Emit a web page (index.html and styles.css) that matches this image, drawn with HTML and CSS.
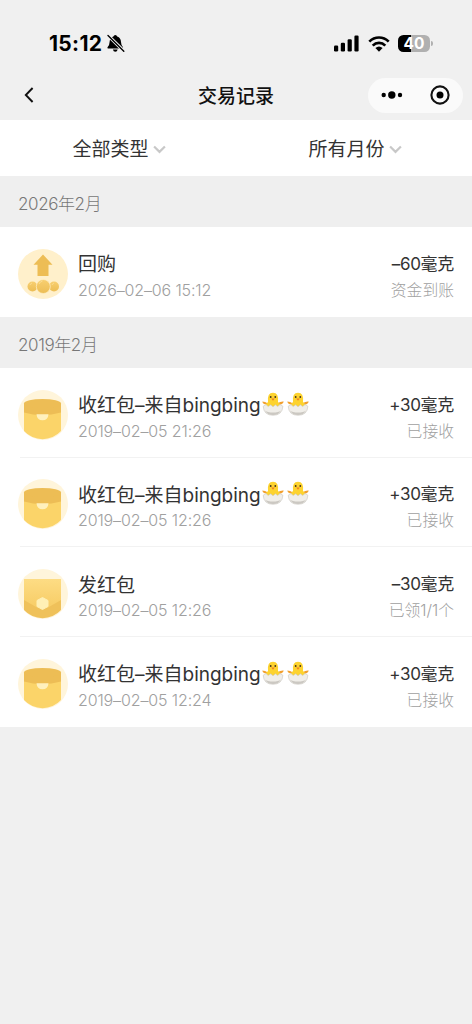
FILE: index.html
```html
<!DOCTYPE html>
<html lang="zh-CN">
<head>
    <meta charset="UTF-8">
    <meta name="viewport" content="width=device-width, initial-scale=1.0">
    <title>交易记录</title>
    <link rel="stylesheet" href="styles.css">
</head>
<body>
    <!-- shared icons -->
    <svg class="defs" width="0" height="0">
        <defs>
            <linearGradient id="gold" x1="0" y1="0" x2="0" y2="1">
                <stop offset="0" stop-color="#f8cf70"/>
                <stop offset="1" stop-color="#ecbd55"/>
            </linearGradient>
            <linearGradient id="flap" x1="0" y1="0" x2="0" y2="1">
                <stop offset="0" stop-color="#fddc84"/>
                <stop offset="1" stop-color="#f7cd66"/>
            </linearGradient>
        </defs>
        <symbol id="received" viewBox="0 0 50 50">
            <circle cx="25" cy="25" r="25" fill="#fff5db"/>
            <path d="M6 14h37v27A25 25 0 0 1 6 41z" fill="#fbd469"/>
            <path d="M6 13.500v9q18 5 37 0v-9z" fill="#edbd55"/>
            <ellipse cx="24.500" cy="13.500" rx="18.500" ry="4.500" fill="#edbd55"/>
            <path d="M18.500 24.300h12q-.5 6-6 6t-6-6z" fill="#fff0bd"/>
        </symbol>
        <symbol id="sent" viewBox="0 0 50 50">
            <circle cx="25" cy="25" r="25" fill="#fff5db"/>
            <path d="M6 10h37v31A25 25 0 0 1 6 41z" fill="#efc15a"/>
            <path d="M6 10h37v21L30 38.500H19L6 31z" fill="url(#flap)"/>
            <path d="M24.500 28.500l5.500 3v6l-5.500 3-5.500-3v-6z" fill="#fff0b5" stroke="#fff0b5" stroke-linejoin="round"/>
        </symbol>
        <symbol id="chick" viewBox="0 0 22 24">
            <path d="M4.500 12.500Q.8 12.500 .3 9.500q3 .2 5.200 1.800L16 11q2.500-1.800 5.700-1.500-.5 3-4.700 3.300V16H5z" fill="#f2a02e"/>
            <path d="M4 15v-3l2-2Q5 .8 11 .8T16 10l2 2v3z" fill="#fdd32f"/>
            <circle cx="8.700" cy="5" r=".9" fill="#43351b"/>
            <circle cx="13.300" cy="5" r=".9" fill="#43351b"/>
            <path d="M9.200 6.600h3.600L11 8.800z" fill="#ef7f22"/>
            <path d="M1.200 14.200l2.800-1.700 2.200 2 2.500-1.700 2.300 2 2.400-2 2.300 1.700 2.300-2 2.900 1.700Q20.300 23.300 11 23.300T1.200 14.200z" fill="#f0eee9" stroke="#c9c6bf" stroke-width=".6"/>
            <path d="M3 18.500q2.500 4.500 8 4.500t8-4.500q-2.500 2-8 2t-8-2z" fill="#cbc8c2"/>
        </symbol>
        <symbol id="arrow" viewBox="0 0 12 8">
            <path d="M1 1.200l5 5 5-5" fill="none" stroke="#c8c8c8" stroke-width="2"/>
        </symbol>
    </svg>

    <div class="status-bar">
        <div class="status-left">
            <span class="time">15:12</span>
            <svg width="19" height="19" viewBox="0 0 19 19">
                <path d="M9.300 1q1.500 0 1.900 1.500 3.600 1 3.800 5.500.1 3.500 2 5.200.5 1.300-.8 1.300H2.300Q1 14.500 1.500 13.200 3.500 11.500 3.600 8q.2-4.500 3.800-5.500Q7.800 1 9.300 1z"/>
                <path d="M6.900 15.600h4.800q-.5 2.200-2.400 2.200t-2.400-2.200z"/>
                <path d="M2.200 1.600l15.600 15.400" stroke="#f0f0f0" stroke-width="3.200"/>
                <path d="M2 1.600l15.800 15.600" stroke="#000" stroke-width="1.400" stroke-linecap="round"/>
            </svg>
        </div>
        <div class="status-right">
            <svg width="25" height="17" viewBox="0 0 25 17">
                <rect x="0" y="10.500" width="4.200" height="6" rx="1.200"/>
                <rect x="6.800" y="7.800" width="4.200" height="8.700" rx="1.200"/>
                <rect x="13.600" y="4.300" width="4.200" height="12.200" rx="1.200"/>
                <rect x="20.400" y=".5" width="4.200" height="16" rx="1.200"/>
            </svg>
            <svg class="wifi" width="22" height="16" viewBox="0 0 22 16">
                <path d="M1.300 5.600q4.200-4.100 9.700-4.100t9.700 4.100M4.700 9.600q2.700-2.700 6.300-2.700t6.300 2.700" fill="none" stroke="#000" stroke-width="2.700"/>
                <path d="M11 15.700L7.400 12q3.600-3.200 7.200 0z"/>
            </svg>
            <div class="battery"><span>40</span></div>
            <div class="battery-tip"></div>
        </div>
    </div>

    <div class="nav">
        <svg class="back" width="10" height="16" viewBox="0 0 10 16">
            <path d="M8.600 1L1.800 8l6.800 7" fill="none" stroke="#111" stroke-width="1.900"/>
        </svg>
        <h1>交易记录</h1>
        <div class="capsule">
            <svg width="22" height="8" viewBox="0 0 22 8">
                <circle cx="2.700" cy="4" r="2.200"/>
                <circle cx="10.800" cy="4" r="3.700"/>
                <circle cx="19" cy="4" r="2.200"/>
            </svg>
            <svg width="20" height="20" viewBox="0 0 20 20">
                <circle cx="10" cy="10" r="8.600" fill="none" stroke="#111" stroke-width="2.100"/>
                <circle cx="10" cy="10" r="3.500"/>
            </svg>
        </div>
    </div>

    <div class="filters">
        <div class="filter">全部类型<svg width="13" height="9"><use href="#arrow"/></svg></div>
        <div class="filter">所有月份<svg width="13" height="9"><use href="#arrow"/></svg></div>
    </div>

    <div class="month">2026年2月</div>
    <div class="list">
        <div class="item">
            <svg class="icon" viewBox="0 0 50 50">
                <circle cx="25" cy="25" r="25" fill="#fff0cb"/>
                <path d="M25 5.500l9.500 10.300h-4V27h-11V15.800h-4z" fill="#edbd55"/>
                <circle cx="14.500" cy="37.500" r="5" fill="url(#gold)"/>
                <circle cx="36" cy="37.500" r="5" fill="url(#gold)"/>
                <circle cx="25.300" cy="37.500" r="7" fill="url(#gold)" stroke="#fff0cb" stroke-width=".7"/>
                <path d="M21 35q1-2.500 3.500-3M12 36q.5-1.500 2-2M34 36q.5-1.500 2-2" fill="none" stroke="#fbdc91"/>
            </svg>
            <div class="info">
                <div class="name">回购</div>
                <div class="date">2026–02–06 15:12</div>
            </div>
            <div class="result">
                <div class="amount">–60毫克</div>
                <div class="state">资金到账</div>
            </div>
        </div>
    </div>

    <div class="month">2019年2月</div>
    <div class="list">
        <div class="item">
            <svg class="icon"><use href="#received"/></svg>
            <div class="info">
                <div class="name"><span>收红包–来自bingbing</span><svg class="emoji"><use href="#chick"/></svg><svg class="emoji"><use href="#chick"/></svg></div>
                <div class="date">2019–02–05 21:26</div>
            </div>
            <div class="result">
                <div class="amount">+30毫克</div>
                <div class="state">已接收</div>
            </div>
        </div>
        <div class="item">
            <svg class="icon"><use href="#received"/></svg>
            <div class="info">
                <div class="name"><span>收红包–来自bingbing</span><svg class="emoji"><use href="#chick"/></svg><svg class="emoji"><use href="#chick"/></svg></div>
                <div class="date">2019–02–05 12:26</div>
            </div>
            <div class="result">
                <div class="amount">+30毫克</div>
                <div class="state">已接收</div>
            </div>
        </div>
        <div class="item">
            <svg class="icon"><use href="#sent"/></svg>
            <div class="info">
                <div class="name">发红包</div>
                <div class="date">2019–02–05 12:26</div>
            </div>
            <div class="result">
                <div class="amount">–30毫克</div>
                <div class="state">已领1/1个</div>
            </div>
        </div>
        <div class="item">
            <svg class="icon"><use href="#received"/></svg>
            <div class="info">
                <div class="name"><span>收红包–来自bingbing</span><svg class="emoji"><use href="#chick"/></svg><svg class="emoji"><use href="#chick"/></svg></div>
                <div class="date">2019–02–05 12:24</div>
            </div>
            <div class="result">
                <div class="amount">+30毫克</div>
                <div class="state">已接收</div>
            </div>
        </div>
    </div>
</body>
</html>
```
FILE: styles.css
```css
* {
    box-sizing: border-box;
}
body {
    margin: 0;
    min-height: 1024px;
    background: #f0f0f0;
    color: #333;
    font-family: Inter, "Noto Sans CJK SC", sans-serif;
}
svg {
    display: block;
    flex: none;
}
.defs {
    position: absolute;
}

/* Status bar */
.status-bar {
    height: 70px;
    padding: 17px 39px 0 49px;
    display: flex;
    justify-content: space-between;
    align-items: center;
}
.status-left, .status-right {
    display: flex;
    align-items: center;
}
.time {
    width: 54px;
    font-size: 21px;
    font-weight: 700;
    color: #000;
    letter-spacing: 0.3px;
    margin-right: 3px;
}
.wifi {
    margin: 0 8px 0 9px;
}
.battery {
    width: 32px;
    height: 17px;
    border-radius: 5.5px;
    background: linear-gradient(to right, #000 40%, #b0b0b0 40%);
    color: #fff;
    font-size: 15.5px;
    font-weight: 700;
    line-height: 17px;
    text-align: center;
}
.battery-tip {
    width: 2px;
    height: 5px;
    margin-left: 1px;
    border-radius: 0 2px 2px 0;
    background: #b0b0b0;
}

/* Title bar */
.nav {
    height: 50px;
    padding: 0 9px 0 24px;
    display: grid;
    grid-template-columns: 95px 1fr 95px;
    align-items: center;
}
.nav h1 {
    margin: 0;
    padding: 3px 15px 0 0;
    font-size: 19px;
    line-height: 26px;
    font-weight: 500;
    color: #111;
    text-align: center;
}
.capsule {
    height: 35px;
    padding: 0 13px;
    border-radius: 18px;
    background: #fafafa;
    display: flex;
    align-items: center;
    justify-content: space-between;
}

/* Filters */
.filters {
    height: 56px;
    display: flex;
    background: #fff;
}
.filter {
    flex: 1;
    display: flex;
    align-items: center;
    justify-content: center;
    gap: 4px;
    padding: 0 0 2px 2px;
    font-size: 19px;
}
.filter svg {
    margin-top: 5px;
}

/* Records */
.month {
    height: 51px;
    padding-left: 18px;
    line-height: 57px;
    font-size: 17px;
    font-weight: 300;
    letter-spacing: -0.4px;
    color: #777;
    background: #efefef;
}
.list {
    background: #fff;
}
.item {
    height: 89.75px;
    padding: 0 18px;
    display: flex;
    align-items: center;
    background: linear-gradient(#f2f2f2, #f2f2f2) 20px 100% / 100% 1px no-repeat;
}
.item:last-child {
    background: none;
}
.icon {
    width: 50px;
    height: 50px;
    margin-top: 4px;
}
.info {
    flex: 1;
    margin: 7px 0 0 10px;
}
.name {
    display: flex;
    align-items: center;
    height: 28px;
    font-size: 19px;
}
.emoji {
    width: 22px;
    height: 24px;
    margin-left: 1px;
    margin-right: 2px;
}
.date, .state {
    height: 25px;
    line-height: 27px;
    font-weight: 300;
    color: #a0a0a0;
}
.date {
    font-size: 16px;
    letter-spacing: -0.13px;
}
.state {
    font-size: 15.8px;
}
.result {
    margin-top: 8px;
    text-align: right;
}
.amount {
    height: 27px;
    line-height: 28px;
    font-size: 17px;
    letter-spacing: -0.3px;
}
```
